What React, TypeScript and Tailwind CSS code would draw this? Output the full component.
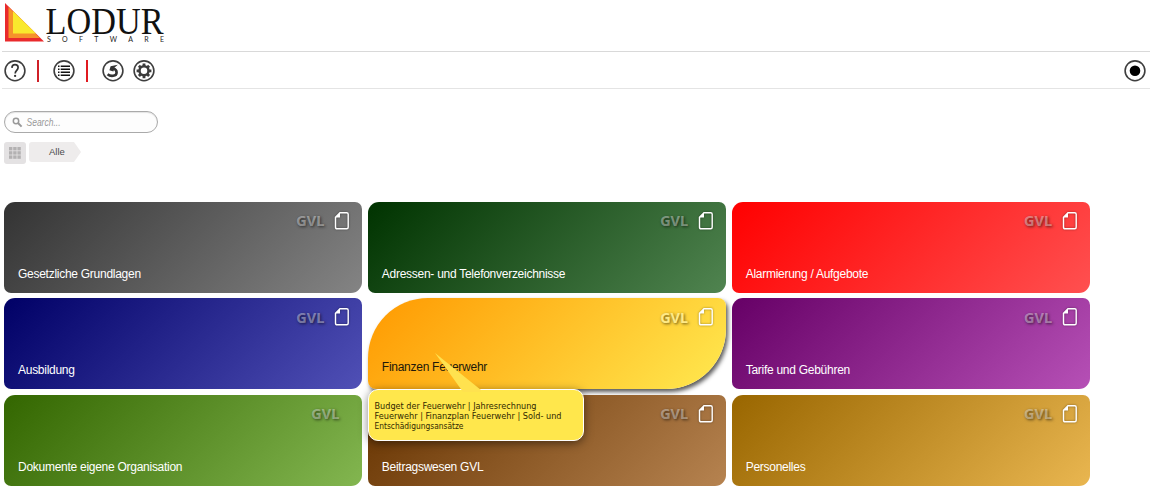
import type { ReactNode } from "react";

type Tile = { title: string; bg: string; doc: boolean; active?: boolean };

const tiles: Tile[] = [
  { title: "Gesetzliche Grundlagen", bg: "from-[#333333] to-[#848484]", doc: true },
  { title: "Adressen- und Telefonverzeichnisse", bg: "from-[#003300] to-[#508450]", doc: true },
  { title: "Alarmierung / Aufgebote", bg: "from-[#ff0000] to-[#ff5050]", doc: true },
  { title: "Ausbildung", bg: "from-[#000066] to-[#5050b6]", doc: true },
  { title: "Finanzen Feuerwehr", bg: "from-[#ff9900] to-[#ffe950]", doc: true, active: true },
  { title: "Tarife und Gebühren", bg: "from-[#660066] to-[#b650b6]", doc: true },
  { title: "Dokumente eigene Organisation", bg: "from-[#336600] to-[#83b650]", doc: false },
  { title: "Beitragswesen GVL", bg: "from-[#663300] to-[#b68350]", doc: true },
  { title: "Personelles", bg: "from-[#996600] to-[#e9b650]", doc: true },
];

function Logo() {
  return (
    <div className="flex">
      <svg width="45" height="46" viewBox="0 0 45 46" className="block">
        <path d="M5 3V41.5H44Z" fill="#e92a2c" />
        <path d="M8.5 7V38H40Z" fill="#f6922b" />
        <path d="M13 11V33.5H36Z" fill="#f9e92d" />
      </svg>
      <div className="w-[122px]">
        <svg width="122" height="35" viewBox="0 0 122 35" className="block overflow-visible">
          <text x="0.5" y="34" fontSize="37" textLength="118" lengthAdjust="spacingAndGlyphs" fill="#111" fontFamily="Liberation Serif, serif">LODUR</text>
        </svg>
        <div className="flex w-[119px] justify-between pl-[2px] font-['Lato',sans-serif] text-[7px] leading-[9px] text-[#222]">
          {"SOFTWARE".split("").map((c, i) => (
            <span key={i}>{c}</span>
          ))}
        </div>
      </div>
    </div>
  );
}

function RoundIcon({ label, children }: { label: string; children: ReactNode }) {
  return (
    <button aria-label={label} className="block size-[22px] shrink-0">
      <svg width="22" height="22" viewBox="0 0 22 22">
        <circle cx="11" cy="10.8" r="9.9" fill="#fff" stroke="#3e3e3e" strokeWidth="1.6" />
        <g transform="translate(0 -0.2)">{children}</g>
      </svg>
    </button>
  );
}

function Toolbar() {
  return (
    <nav className="ml-[2px] mr-[5px] flex h-[38px] items-center border-y border-t-[#d9d9d9] border-b-[#e4e4e4] pl-[2px] pr-[4px] pt-[1px]">
      <RoundIcon label="Hilfe">
        <path d="M7.9 8.1C8 5.9 9.2 4.9 11 4.9c1.9 0 3.1 1.1 3.1 2.9 0 2.6-2.9 2.9-2.9 5.8" fill="none" stroke="#333" strokeWidth="1.7" />
        <circle cx="11.1" cy="16.1" r="1.15" fill="#333" />
      </RoundIcon>
      <span className="ml-[11px] h-[22px] w-[2px] bg-[#cf2028]" />
      <span className="w-[14px]" />
      <RoundIcon label="Liste">
        <path d="M7.7 6.5H17M7.7 9.5H17M7.7 12.5H17M7.7 15.5H17" stroke="#111" strokeWidth="1.6" />
        <path d="M5 6.5H6.5M5 9.5H6.5M5 12.5H6.5M5 15.5H6.5" stroke="#111" strokeWidth="1.6" />
      </RoundIcon>
      <span className="ml-[11px] h-[22px] w-[2px] bg-[#e01a20]" />
      <span className="w-[14px]" />
      <RoundIcon label="Zurück">
        <path d="M5.6 14.4C8.5 17 14.6 16.6 14.6 12.6c0-2-1.2-3.2-3.2-3.6" fill="none" stroke="#333" strokeWidth="2.6" />
        <path d="M7.4 10.4 8.6 6.4 15.8 5 12.6 7.8 11.4 11.8Z" fill="#333" />
      </RoundIcon>
      <span className="w-[9px]" />
      <RoundIcon label="Einstellungen">
        <circle cx="11" cy="11" r="4.5" fill="none" stroke="#3b3b3b" strokeWidth="2.5" />
        <g stroke="#3b3b3b" strokeWidth="2.8">
          <path d="M11 3.6V6.2M11 15.8V18.4M3.6 11H6.2M15.8 11H18.4" />
          <path d="M5.9 5.9 7.6 7.6M14.4 14.4 16.1 16.1M16.1 5.9 14.4 7.6M7.6 14.4 5.9 16.1" />
        </g>
      </RoundIcon>
      <div className="ml-auto">
        <RoundIcon label="Status">
          <circle cx="11" cy="11" r="5.3" fill="#000" />
        </RoundIcon>
      </div>
    </nav>
  );
}

function DocIcon() {
  return (
    <svg width="16" height="20" viewBox="0 0 16 20" className="shrink-0 drop-shadow-[0_0_1px_rgba(0,0,0,0.4)]">
      <path d="M6 1.7H12.7Q14.2 1.7 14.2 3.2V16.3Q14.2 17.8 12.7 17.8H3Q1.5 17.8 1.5 16.3V6.3Z" fill="none" stroke="#fff" strokeWidth="1.4" />
      <path d="M6 1.5V6.5H1.2Z" fill="#fff" />
    </svg>
  );
}

function Tooltip() {
  return (
    <div className="absolute left-0 top-[91px] z-20 h-[52px] w-[216px] rounded-[10px] border-[1.5px] border-white bg-[#ffe74c] pl-[5px] pt-[11px] shadow-[0_2px_10px_rgba(0,0,0,0.5)]">
      <svg width="50" height="41" viewBox="0 0 50 41" className="absolute left-[65px] top-[-37px]">
        <path d="M1 0 47 37V39H29Z" fill="#ffe24f" />
      </svg>
      <svg width="200" height="32" className="block overflow-visible" fill="#302800" fontSize="8.7" fontFamily="DejaVu Sans, sans-serif">
        <text x="0.5" y="8" textLength="162" lengthAdjust="spacingAndGlyphs">Budget der Feuerwehr | Jahresrechnung</text>
        <text x="0.5" y="18" textLength="187" lengthAdjust="spacingAndGlyphs">Feuerwehr | Finanzplan Feuerwehr | Sold- und</text>
        <text x="0.5" y="28" textLength="89" lengthAdjust="spacingAndGlyphs">Entschädigungsansätze</text>
      </svg>
    </div>
  );
}

function Card({ tile }: { tile: Tile }) {
  const shape = tile.active
    ? "rounded-tl-[60px] rounded-tr-[8px] rounded-br-[60px] rounded-bl-[8px] pb-[14px] text-[#22180a] shadow-[2px_3px_4px_rgba(0,0,0,0.65)]"
    : "rounded-tl-[11px] rounded-tr-[7px] rounded-br-[11px] rounded-bl-[7px] pb-[11px] text-white";
  return (
    <div className="relative h-[91px]">
      <div className={`flex h-full flex-col justify-between bg-linear-[135deg] pl-[14px] pr-[12px] pt-[9px] ${tile.bg} ${shape}`}>
        <div className={`flex h-5 items-center justify-end gap-[10px] ${tile.doc ? "" : "pr-[11px]"}`}>
          <span className={`-mt-[1px] font-['Noto_Sans',sans-serif] text-[14.5px] leading-[18px] font-bold [text-shadow:1px_1px_3px_rgba(0,0,0,0.6)] ${tile.active ? "text-[#ffea87]" : "text-white/40"}`}>GVL</span>
          {tile.doc && <DocIcon />}
        </div>
        <span className="text-[12px] leading-[16px] tracking-[-0.27px]">{tile.title}</span>
      </div>
      {tile.active && <Tooltip />}
    </div>
  );
}

export default function App() {
  return (
    <div className="h-[494px] w-[1155px] overflow-hidden bg-white font-['Liberation_Sans',sans-serif]">
      <header className="h-[51px]">
        <Logo />
      </header>
      <Toolbar />
      <div className="ml-1 mt-[22px] flex h-[22px] w-[154px] items-center gap-[3px] rounded-full border border-[#aaa] bg-[#fdfdfd] pl-[7px] shadow-[inset_0_1px_1px_rgba(0,0,0,0.1)]">
        <svg width="11" height="11" viewBox="0 0 11 11">
          <circle cx="4" cy="4" r="2.7" fill="none" stroke="#999" strokeWidth="1.5" />
          <path d="M6 6 9.6 9.6" stroke="#999" strokeWidth="2" />
        </svg>
        <svg width="40" height="14" fill="#999" fontSize="10" fontStyle="italic" fontFamily="Liberation Sans, sans-serif">
          <text x="0.5" y="10.5" textLength="34" lengthAdjust="spacingAndGlyphs">Search...</text>
        </svg>
      </div>
      <div className="ml-1 mt-[9px] flex h-[22px] gap-[3px]">
        <div className="flex size-[22px] items-center justify-center rounded-[3px] bg-[#e4e2e3]">
          <svg width="12" height="12" fill="#b3b1b2">
            {[0, 4.2, 8.4].map((y) => [0, 4.2, 8.4].map((x) => <rect key={`${x}-${y}`} x={x} y={y} width="3.4" height="3.4" />))}
          </svg>
        </div>
        <div className="h-[20px] w-[52px] rounded-l-[3px] bg-[#eeecec] pl-[20px] text-[9.5px] leading-[19px] text-[#4b4b4b] [clip-path:polygon(0_0,45px_0,100%_50%,45px_100%,0_100%)]">
          Alle
        </div>
      </div>
      <main className="ml-1 mt-[37.5px] grid w-[1086px] grid-cols-3 gap-x-[5.5px] gap-y-[5.6px]">
        {tiles.map((tile) => (
          <Card key={tile.title} tile={tile} />
        ))}
      </main>
    </div>
  );
}
